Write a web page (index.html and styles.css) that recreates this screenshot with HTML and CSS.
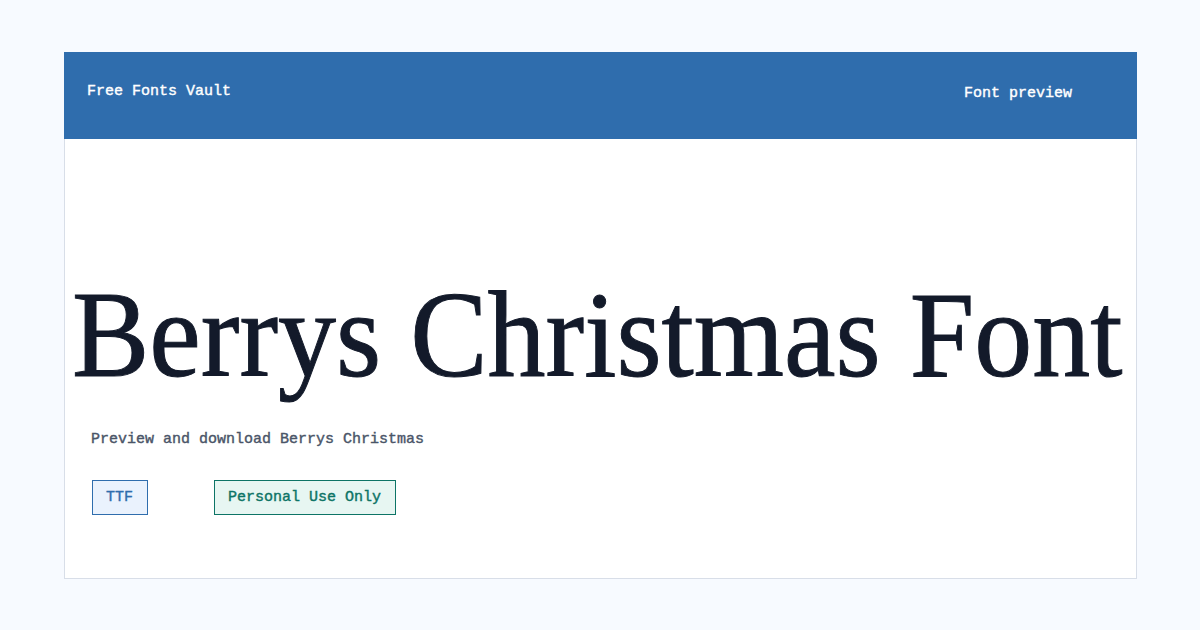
FILE: index.html
```html
<!DOCTYPE html>
<html lang="en">
<head>
<meta charset="utf-8">
<title>Berrys Christmas Font</title>
<link rel="stylesheet" href="styles.css">
</head>
<body>
<main class="card">
  <header class="topbar">
    <span class="brand">Free Fonts Vault</span>
    <span class="crumb">Font preview</span>
  </header>
  <section class="body">
    <h1 class="title">Berrys Christmas Font</h1>
    <p class="lede">Preview and download Berrys Christmas</p>
    <div class="tags">
      <span class="tag tag-format">TTF</span>
      <span class="tag tag-license">Personal Use Only</span>
    </div>
  </section>
</main>
</body>
</html>
```

FILE: styles.css
```css
*, *::before, *::after {
  box-sizing: border-box;
}

html, body {
  margin: 0;
  padding: 0;
}

body {
  width: 1200px;
  height: 630px;
  background: #f7faff;
  font-family: "Liberation Mono", "DejaVu Sans Mono", monospace;
  padding: 52px 63px 0 64px;
  -webkit-text-stroke: 0.4px currentColor;
}

.card {
  width: 1073px;
  height: 527px;
  background: #ffffff;
  border: 1px solid #d8dee8;
  border-top: none;
  display: flex;
  flex-direction: column;
}

.topbar {
  height: 87px;
  margin: 0 -1px;
  background: #2f6dad;
  color: #ffffff;
  display: flex;
  justify-content: space-between;
  align-items: flex-start;
  padding: 31px 64px 0 23px;
  font-size: 15px;
}

.crumb {
  margin-top: 2px;
  margin-right: 1px;
}

.body {
  display: flex;
  flex-direction: column;
  padding: 0 0 0 26px;
}

/* display title: condensed, slightly heavier serif */
.title {
  margin: 136px 0 0 -19px;
  font-family: "Liberation Serif", "Times New Roman", serif;
  font-weight: normal;
  font-size: 123px;
  line-height: 120px;
  color: #131a2a;
  white-space: nowrap;
  transform: scaleX(0.943);
  transform-origin: left center;
  -webkit-text-stroke: 1px #131a2a;
}

.lede {
  margin: 36px 0 0 0;
  font-size: 15px;
  line-height: 17px;
  color: #4a5568;
}

.tags {
  display: flex;
  gap: 66px;
  margin-top: 32px;
  padding-left: 1px;
}

.tag {
  font-size: 15px;
  padding: 8px 14px 8px 13px;
  line-height: 17px;
}

.tag-format {
  background: #eaf2fd;
  color: #2f6dad;
  border: 1px solid #2f6dad;
}

.tag-license {
  background: #e7f6f2;
  color: #0d7466;
  border: 1px solid #0d7466;
}
```
